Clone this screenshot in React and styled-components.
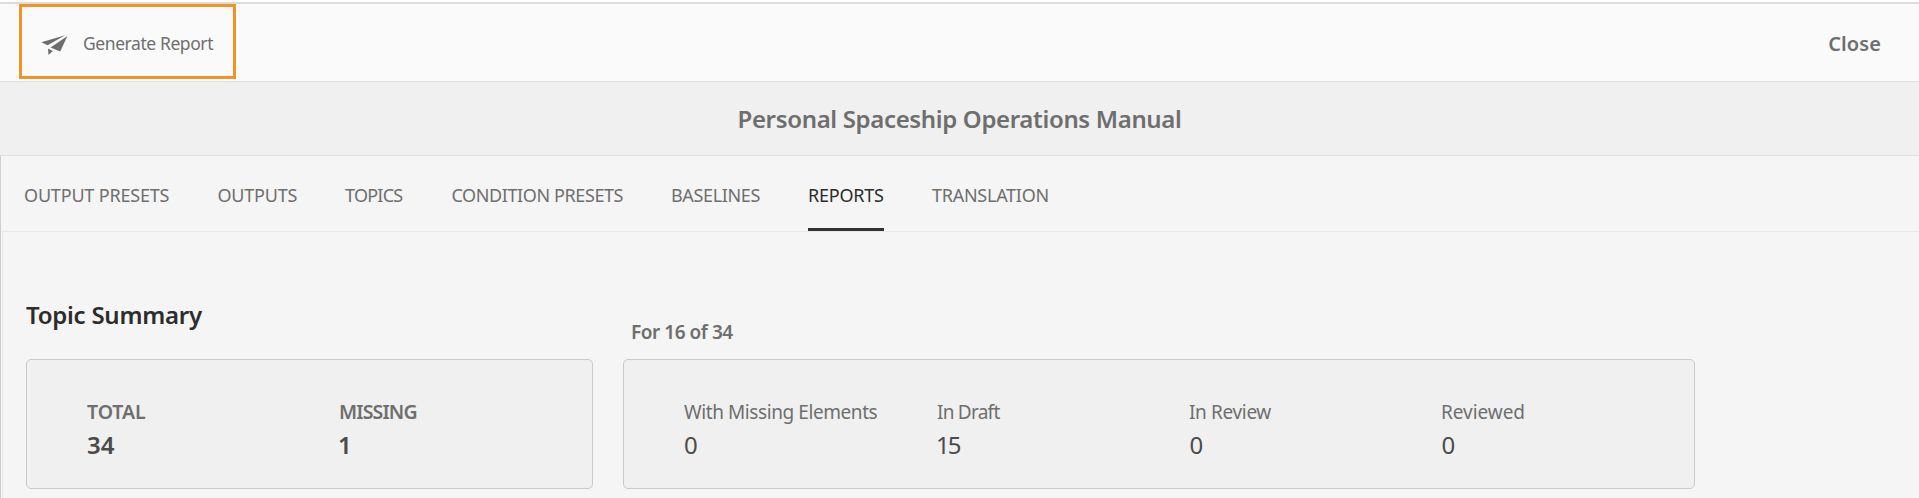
import React from "react";
import styled, { createGlobalStyle } from "styled-components";

const GlobalStyle = createGlobalStyle`
  *, *::before, *::after { box-sizing: border-box; }
  body {
    margin: 0;
    background: #f5f5f5;
    color: #6e6e6e;
    font-family: "Noto Sans", "Open Sans", sans-serif;
    overflow: hidden;
  }
`;

const Page = styled.div`
  display: flex;
  flex-direction: column;
  height: 498px;
`;

const Toolbar = styled.header`
  display: flex;
  justify-content: space-between;
  align-items: flex-start;
  height: 82px;
  padding: 0 38px 0 19px;
  background: #fafafa;
  border-bottom: 1px solid #e0e0e0;

  &::before {
    content: "";
    position: absolute;
    top: 0;
    left: 0;
    right: 0;
    height: 4px;
    background: #fff;
    border-bottom: 2px solid #dbdbdb;
  }
`;

const GenerateButton = styled.button`
  display: flex;
  align-items: center;
  gap: 15px;
  width: 217px;
  height: 75px;
  margin: 4px 0 0;
  padding: 3px 0 0 19px;
  border: 3px solid #f29423;
  background: transparent;
  color: inherit;
  font: 400 17.5px/24px "Noto Sans", "Open Sans", sans-serif;
  letter-spacing: -0.42px;
  white-space: nowrap;
`;

const PlaneIcon = styled.svg`
  flex: none;
  width: 27px;
  height: 21px;
  margin-top: 5px;
  fill: #6e6e6e;
`;

const CloseButton = styled.button`
  margin: 28px 0 0;
  padding: 0;
  border: 0;
  background: transparent;
  color: inherit;
  font: 600 20px/32px "Noto Sans", "Open Sans", sans-serif;
  letter-spacing: 0.1px;
`;

const TitleBar = styled.div`
  height: 74px;
  background: #f0f0f0;
  border-bottom: 1px solid #e0e0e0;
`;

const Title = styled.h1`
  margin: 0;
  text-align: center;
  font-size: 24px;
  font-weight: 600;
  line-height: 73px;
  letter-spacing: -0.34px;
`;

const Main = styled.main`
  flex: 1;
  display: flex;
  flex-direction: column;
  padding-left: 1px;
  border-left: 1px solid #cfcfcf;
`;

const Tabs = styled.nav`
  display: flex;
  gap: 48px;
  height: 75px;
  padding-left: 22px;
`;

const Tab = styled.div`
  width: ${(p) => p.$width}px;
  height: 75px;
  padding-top: 6px;
  border-bottom: 3px solid ${(p) => (p.$active ? "#323232" : "transparent")};
  color: ${(p) => (p.$active ? "#2c2c2c" : "#6e6e6e")};
  font-size: 18px;
  line-height: 66px;
  letter-spacing: ${(p) => p.$tracking}px;
  white-space: nowrap;
`;

const Panel = styled.section`
  flex: 1;
  display: grid;
  grid-template-columns: 567px 1072px;
  grid-template-rows: 127px 130px;
  column-gap: 30px;
  padding-left: 23px;
  border-top: 1px solid #e9e9e9;
  border-left: 1px solid #e9e9e9;
`;

const Heading = styled.h2`
  align-self: end;
  margin: 0;
  padding-bottom: 28px;
  color: #2c2c2c;
  font-size: 24px;
  font-weight: 600;
  line-height: 32px;
  letter-spacing: -0.25px;
`;

const SubHeading = styled.h3`
  align-self: end;
  margin: 0;
  padding: 0 0 15px 8px;
  font-size: 19px;
  font-weight: 600;
  line-height: 24px;
  letter-spacing: -0.46px;
`;

const Card = styled.div`
  display: grid;
  grid-template-columns: ${(p) => (p.$columns > 2 ? "253px" : "252px")} repeat(${(p) => p.$columns - 1}, 252px);
  padding: 38px 0 0 60px;
  border: 1px solid #cacaca;
  border-radius: 5px;
  background: #f0f0f0;
`;

const Stat = styled.div`
  font-weight: ${(p) => (p.$strong ? 600 : 400)};
`;

const Label = styled.div`
  font-size: ${(p) => p.$size}px;
  line-height: 28px;
  letter-spacing: ${(p) => p.$tracking}px;
  white-space: nowrap;
`;

const Value = styled.div`
  margin-top: 2px;
  color: #4b4b4b;
  font-size: 24px;
  line-height: 34px;
  letter-spacing: ${(p) => p.$tracking}px;
  text-indent: ${(p) => p.$indent}px;
`;

const tabs = [
  { name: "OUTPUT PRESETS", width: 145.5, tracking: -0.18 },
  { name: "OUTPUTS", width: 79.5, tracking: -0.2 },
  { name: "TOPICS", width: 58.5, tracking: -0.75 },
  { name: "CONDITION PRESETS", width: 171.5, tracking: -0.4 },
  { name: "BASELINES", width: 89, tracking: -0.36 },
  { name: "REPORTS", width: 76, tracking: -0.23, active: true },
  { name: "TRANSLATION", width: 117, tracking: -0.26 },
];

const totals = [
  { label: "TOTAL", value: "34", tracking: -0.05, valueTracking: 0 },
  { label: "MISSING", value: "1", tracking: -0.83, indent: -1 },
];

const statuses = [
  { label: "With Missing Elements", value: "0", tracking: -0.42 },
  { label: "In Draft", value: "15", tracking: -0.75, valueTracking: -2, indent: -1 },
  { label: "In Review", value: "0", tracking: -0.35, indent: 0.5 },
  { label: "Reviewed", value: "0", tracking: -0.05, indent: 0.5 },
];

function StatCard({ stats, strong }) {
  return (
    <Card $columns={stats.length}>
      {stats.map((s) => (
        <Stat key={s.label} $strong={strong}>
          <Label $size={strong ? 19.5 : 19} $tracking={s.tracking}>{s.label}</Label>
          <Value $tracking={s.valueTracking || 0} $indent={s.indent || 0}>{s.value}</Value>
        </Stat>
      ))}
    </Card>
  );
}

export default function App() {
  return (
    <Page>
      <GlobalStyle />
      <Toolbar>
        <GenerateButton>
          <PlaneIcon viewBox="0 0 27 21" aria-hidden="true">
            <path d="M0.3 7.3 24.2 0.2 6.6 10.3Z" />
            <path d="M26.4 1.1 19.2 16.4 9.6 12.4Z" />
            <path d="M7 13.4 11.8 16 7.5 20Z" />
          </PlaneIcon>
          Generate Report
        </GenerateButton>
        <CloseButton>Close</CloseButton>
      </Toolbar>
      <TitleBar>
        <Title>Personal Spaceship Operations Manual</Title>
      </TitleBar>
      <Main>
        <Tabs>
          {tabs.map((t) => (
            <Tab key={t.name} $width={t.width} $tracking={t.tracking} $active={t.active}>
              {t.name}
            </Tab>
          ))}
        </Tabs>
        <Panel>
          <Heading>Topic Summary</Heading>
          <SubHeading>For 16 of 34</SubHeading>
          <StatCard stats={totals} strong />
          <StatCard stats={statuses} />
        </Panel>
      </Main>
    </Page>
  );
}
